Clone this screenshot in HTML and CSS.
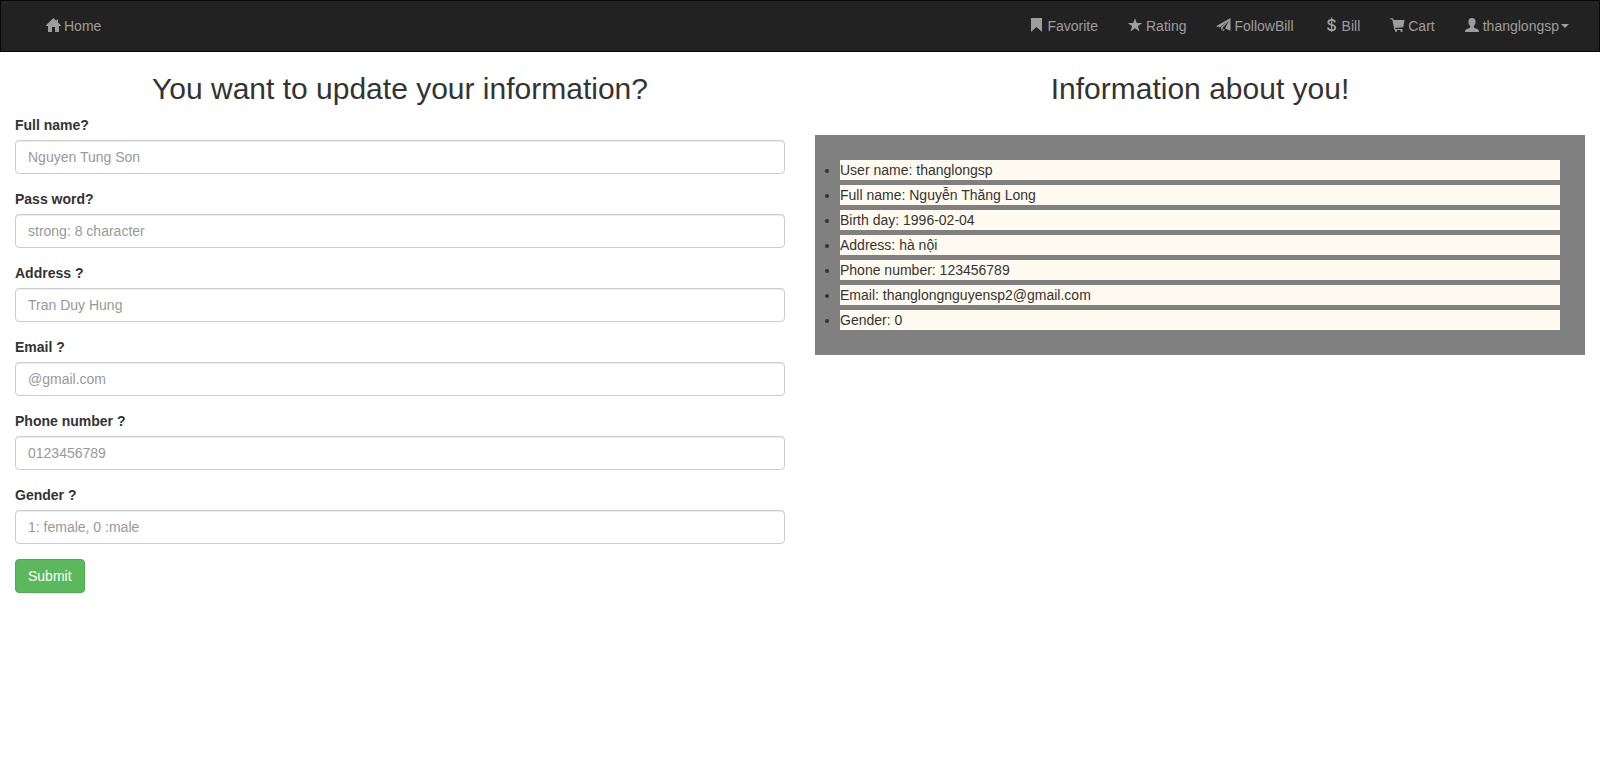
FILE: index.html
```html
<!DOCTYPE html>
<html lang="en">
<head>
  <meta charset="utf-8">
  <meta name="viewport" content="width=device-width, initial-scale=1">
  <title>Update information</title>
  <link rel="stylesheet" href="styles.css">
</head>
<body>
  <nav class="navbar">
    <ul class="nav">
      <li><a class="nav-link" href="#home">
        <svg class="icon" viewBox="0 0 14 16" aria-hidden="true"><path d="M7.400 0 L10.500 2.900 V1.600 H12 V4.400 L15 7.300 V8 H13 V14 H9 V9 H6 V14 H2 V8 H0 V7.300Z"/></svg>
        <span>Home</span></a></li>
    </ul>
    <ul class="nav">
      <li><a class="nav-link" href="#favorite">
        <svg class="icon" viewBox="0 0 14 16" aria-hidden="true"><path d="M2 0 H13 V14 L7.500 9 L2 14Z"/></svg>
        <span>Favorite</span></a></li>
      <li><a class="nav-link" href="#rating">
        <svg class="icon" viewBox="0 0 14 16" aria-hidden="true"><path d="M7 .200 L8.800 5 H14.200 L9.900 8.200 L11.500 13.400 L7 10.300 L2.500 13.400 L4.100 8.200 L-.200 5 H5.200Z"/></svg>
        <span>Rating</span></a></li>
      <li><a class="nav-link" href="#followbill">
        <svg class="icon" viewBox="0 0 14 16" aria-hidden="true"><path d="M14.500 0 V12.700 L9 10.400 L13 2.800 L6.800 9.500 L6.200 13.500 L4.800 9.600 L11.600 3 L4 9.200 L0 8.300Z M7.300 11 L8.800 11.600 L7 13.600Z"/></svg>
        <span>FollowBill</span></a></li>
      <li><a class="nav-link" href="#bill">
        <svg class="icon" viewBox="0 0 14 16" aria-hidden="true"><path class="icon-line" d="M11 4.300 C10.800 2.700 9.500 1.800 7.700 1.800 C5.600 1.800 4.300 2.700 4.300 4.200 C4.300 5.800 5.600 6.300 7.600 6.800 C9.900 7.300 11.300 8 11.300 9.700 C11.300 11.300 9.900 12.200 7.800 12.200 C5.600 12.200 4.100 11.200 3.900 9.300"/><path d="M7 -.500 H8.300 V14 H7Z"/></svg>
        <span>Bill</span></a></li>
      <li><a class="nav-link" href="#cart">
        <svg class="icon" viewBox="0 0 14 16" aria-hidden="true"><path d="M0 .200 H3 L3.700 1.900 H14.500 L13.300 9.200 L5 9.900 L5.300 11 H12.500 V12 H4.400 L2.200 1.300 H0Z"/><path d="M5 12 H7 V13.800 H5Z M10.500 12 H12.500 V13.800 H10.500Z"/></svg>
        <span>Cart</span></a></li>
      <li><a class="nav-link" href="#account" aria-haspopup="true">
        <svg class="icon" viewBox="0 0 14 16" aria-hidden="true"><path d="M7 0 C9.600 0 10.700 1.500 10.600 3.700 C10.500 5.600 9.900 6.900 8.800 8 V9.200 C9.300 10.300 12.300 10.600 13.300 11.700 Q14 12.500 14 14 H0 Q0 12.500 .700 11.700 C1.700 10.600 4.700 10.300 5.200 9.200 V8 C4.100 6.900 3.500 5.600 3.400 3.700 C3.300 1.500 4.400 0 7 0Z"/></svg>
        <span class="user-name">thanglongsp</span></a></li>
    </ul>
  </nav>

  <main class="content">
    <section class="column">
      <h2 class="title">You want to update your information?</h2>
      <form class="form">
        <div class="form-group">
          <label class="label" for="full-name">Full name?</label>
          <input class="input" id="full-name" type="text" placeholder="Nguyen Tung Son">
        </div>
        <div class="form-group">
          <label class="label" for="password">Pass word?</label>
          <input class="input" id="password" type="password" placeholder="strong: 8 character">
        </div>
        <div class="form-group">
          <label class="label" for="address">Address ?</label>
          <input class="input" id="address" type="text" placeholder="Tran Duy Hung">
        </div>
        <div class="form-group">
          <label class="label" for="email">Email ?</label>
          <input class="input" id="email" type="text" placeholder="@gmail.com">
        </div>
        <div class="form-group">
          <label class="label" for="phone">Phone number ?</label>
          <input class="input" id="phone" type="text" placeholder="0123456789">
        </div>
        <div class="form-group">
          <label class="label" for="gender">Gender ?</label>
          <input class="input" id="gender" type="text" placeholder="1: female, 0 :male">
        </div>
        <button class="submit" type="submit">Submit</button>
      </form>
    </section>

    <section class="column">
      <h2 class="title">Information about you!</h2>
      <ul class="info">
        <li class="info-item">User name: thanglongsp</li>
        <li class="info-item">Full name: Nguyễn Thăng Long</li>
        <li class="info-item">Birth day: 1996-02-04</li>
        <li class="info-item">Address: hà nội</li>
        <li class="info-item">Phone number: 123456789</li>
        <li class="info-item">Email: thanglongnguyensp2@gmail.com</li>
        <li class="info-item">Gender: 0</li>
      </ul>
    </section>
  </main>
</body>
</html>
```

FILE: styles.css
```css
*,
*::before,
*::after {
  box-sizing: border-box;
}

body {
  margin: 0;
  background: #fff;
  color: #333;
  font-family: "Liberation Sans", Arial, sans-serif;
  font-size: 14px;
  line-height: 20px;
}

.navbar {
  display: flex;
  flex-wrap: wrap;
  justify-content: space-between;
  padding: 0 15px 0 30px;
  border: 1px solid #080808;
  background: #222;
}

.nav {
  display: flex;
  flex-wrap: wrap;
  margin: 0;
  padding: 0;
  list-style: none;
}

.nav-link {
  display: flex;
  align-items: center;
  gap: 4px;
  padding: 15px;
  color: #9d9d9d;
  text-decoration: none;
}

.nav-link:hover {
  color: #fff;
}

.icon {
  width: 14px;
  height: 16px;
  overflow: visible;
  fill: currentColor;
}

.icon-line {
  fill: none;
  stroke: currentColor;
  stroke-width: 1.8;
}

.user-name {
  display: flex;
  align-items: center;
  gap: 2px;
}

.user-name::after {
  content: "";
  border-top: 4px solid;
  border-right: 4px solid transparent;
  border-left: 4px solid transparent;
}

.content {
  display: grid;
  grid-template-columns: 1fr 1fr;
  align-items: start;
}

.column {
  padding: 20px 15px;
}

.title {
  margin: 0 0 10px;
  font-size: 30px;
  font-weight: 500;
  line-height: 33px;
  text-align: center;
}

.form-group {
  margin-bottom: 15px;
}

.label {
  display: block;
  margin-bottom: 5px;
  font-weight: 700;
}

.input {
  display: block;
  width: 100%;
  height: 34px;
  padding: 6px 12px;
  border: 1px solid #ccc;
  border-radius: 4px;
  background: #fff;
  box-shadow: inset 0 1px 1px rgba(0, 0, 0, 0.075);
  color: #555;
  font: inherit;
}

.input::placeholder {
  color: #999;
  opacity: 1;
}

.submit {
  padding: 6px 12px;
  border: 1px solid #4cae4c;
  border-radius: 4px;
  background: #5cb85c;
  color: #fff;
  font: inherit;
  cursor: pointer;
}

.info {
  margin: 30px 0 0;
  padding: 25px;
  background: gray;
}

.info-item {
  background: floralwhite;
}

.info-item + .info-item {
  margin-top: 5px;
}
```
